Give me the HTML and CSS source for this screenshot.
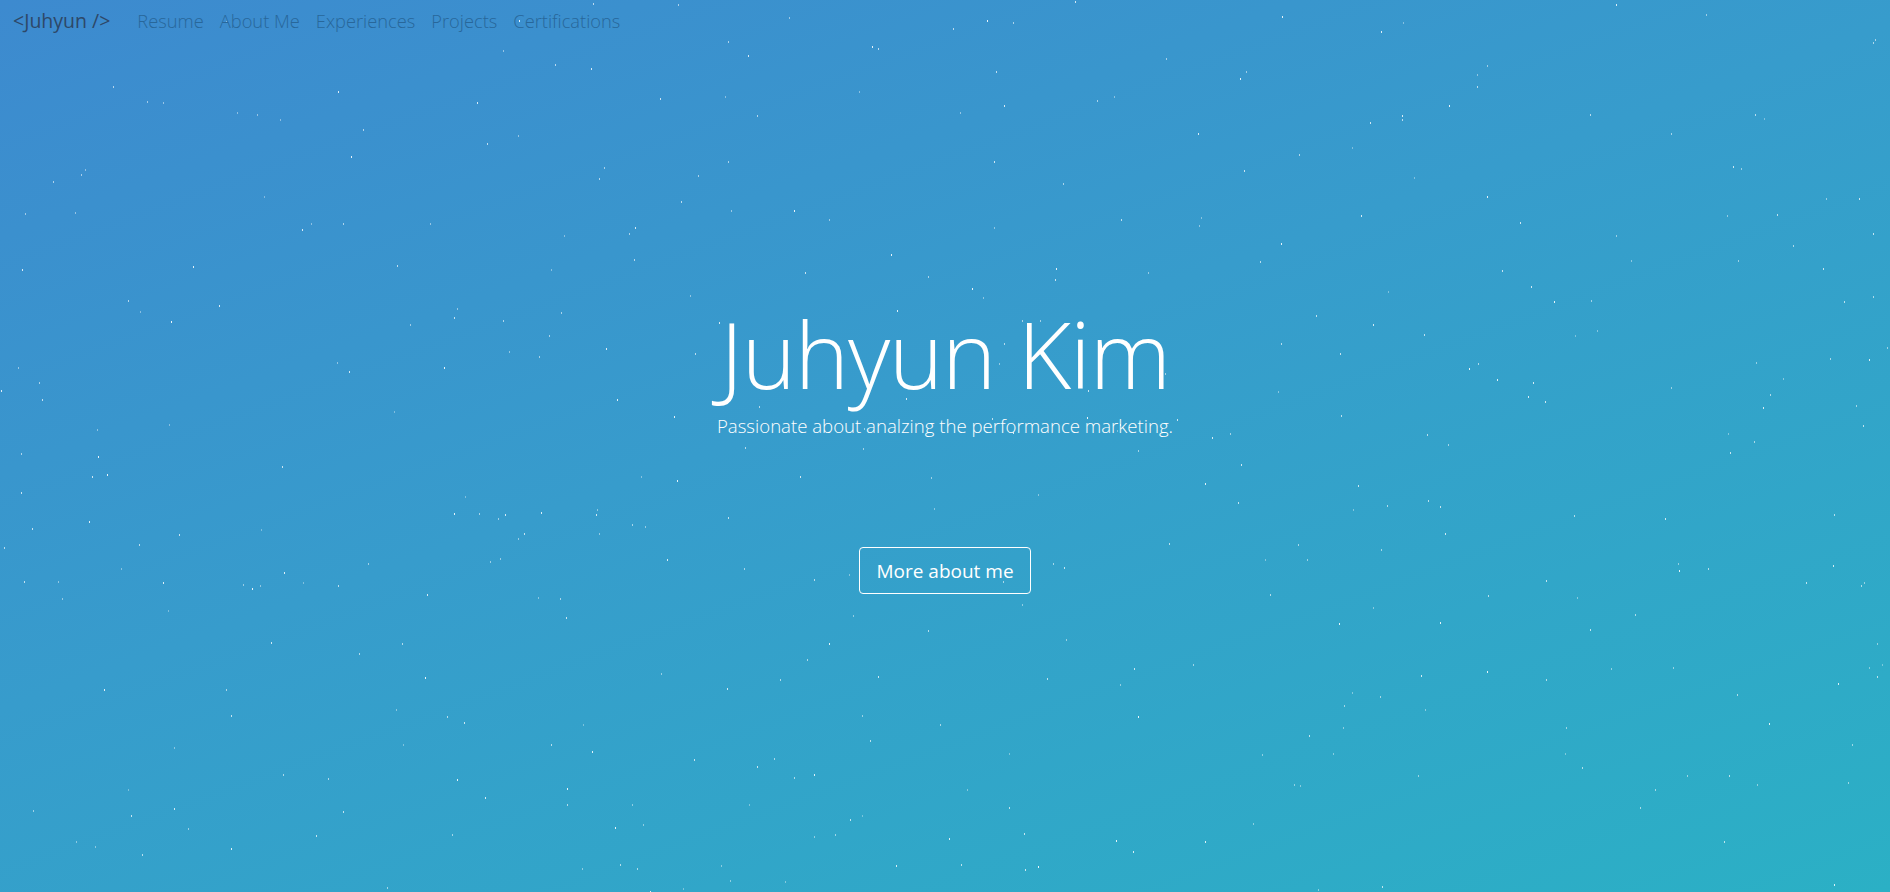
FILE: index.html
```html
<!DOCTYPE html>
<html lang="en">
<head>
<meta charset="utf-8">
<title>Juhyun Kim</title>
<link rel="stylesheet" href="styles.css">
</head>
<body>
<div class="page">
  <div class="stars" id="stars"></div>
  <nav class="nav">
    <a class="brand" href="#">&lt;Juhyun /&gt;</a>
    <ul class="menu">
      <li><a href="#">Resume</a></li>
      <li><a href="#">About Me</a></li>
      <li><a href="#">Experiences</a></li>
      <li><a href="#">Projects</a></li>
      <li><a href="#">Certifications</a></li>
    </ul>
  </nav>
  <main class="hero">
    <h1 class="title">Juhyun Kim</h1>
    <p class="subtitle">Passionate about analzing the performance marketing.</p>
    <a class="btn" href="#">More about me</a>
  </main>
</div>
<script src="stars.js"></script>
</body>
</html>
```
FILE: styles.css
```css
* { box-sizing: border-box; }
html, body { margin: 0; padding: 0; height: 100%; }
body {
  font-family: "Open Sans", "Noto Sans", sans-serif;
  overflow: hidden;
}
.page {
  position: relative;
  width: 100%;
  height: 892px;
  background: linear-gradient(160deg, #3d8acf 0%, #379ccc 45%, #2bb0c5 100%);
  display: flex;
  flex-direction: column;
}
.stars {
  position: absolute;
  inset: 0;
  pointer-events: none;
}
.star {
  position: absolute;
  width: 1px;
  height: 2px;
  background: #fff;
}
.nav {
  position: relative;
  display: flex;
  align-items: center;
  gap: 27px;
  padding: 3px 13px 7px;
  height: 44px;
}
.brand {
  font-size: 19.5px;
  color: #2e4868;
  text-decoration: none;
  font-weight: 400;
}
.menu {
  list-style: none;
  margin: 0;
  padding: 0;
  display: flex;
  gap: 16px;
}
.menu a {
  font-size: 18.3px;
  font-weight: 300;
  color: #28679a;
  text-decoration: none;
}
.hero {
  position: relative;
  display: flex;
  flex-direction: column;
  align-items: center;
  color: #fff;
  padding-top: 264px;
}
.title {
  margin: 0;
  font-size: 92px;
  font-weight: 300;
  line-height: 1;
  letter-spacing: -1.2px;
}
.subtitle {
  margin: 13px 0 0;
  font-size: 18.6px;
  font-weight: 300;
}
.btn {
  margin-top: 109px;
  display: inline-flex;
  align-items: center;
  justify-content: center;
  width: 172px;
  height: 47px;
  border: 1px solid #fff;
  border-radius: 4px;
  color: #fff;
  text-decoration: none;
  font-size: 19px;
  font-weight: 400;
}
```
FILE: stars.js
```js
(function () {
  var box = document.getElementById('stars');
  var seed = 20240611;
  function rnd() {
    seed = (seed * 1664525 + 1013904223) % 4294967296;
    return seed / 4294967296;
  }
  var frag = document.createDocumentFragment();
  for (var i = 0; i < 420; i++) {
    var s = document.createElement('div');
    s.className = 'star';
    s.style.left = Math.floor(rnd() * 1890) + 'px';
    s.style.top = Math.floor(rnd() * 892) + 'px';
    s.style.opacity = (0.35 + rnd() * 0.55).toFixed(2);
    frag.appendChild(s);
  }
  box.appendChild(frag);
})();
```
